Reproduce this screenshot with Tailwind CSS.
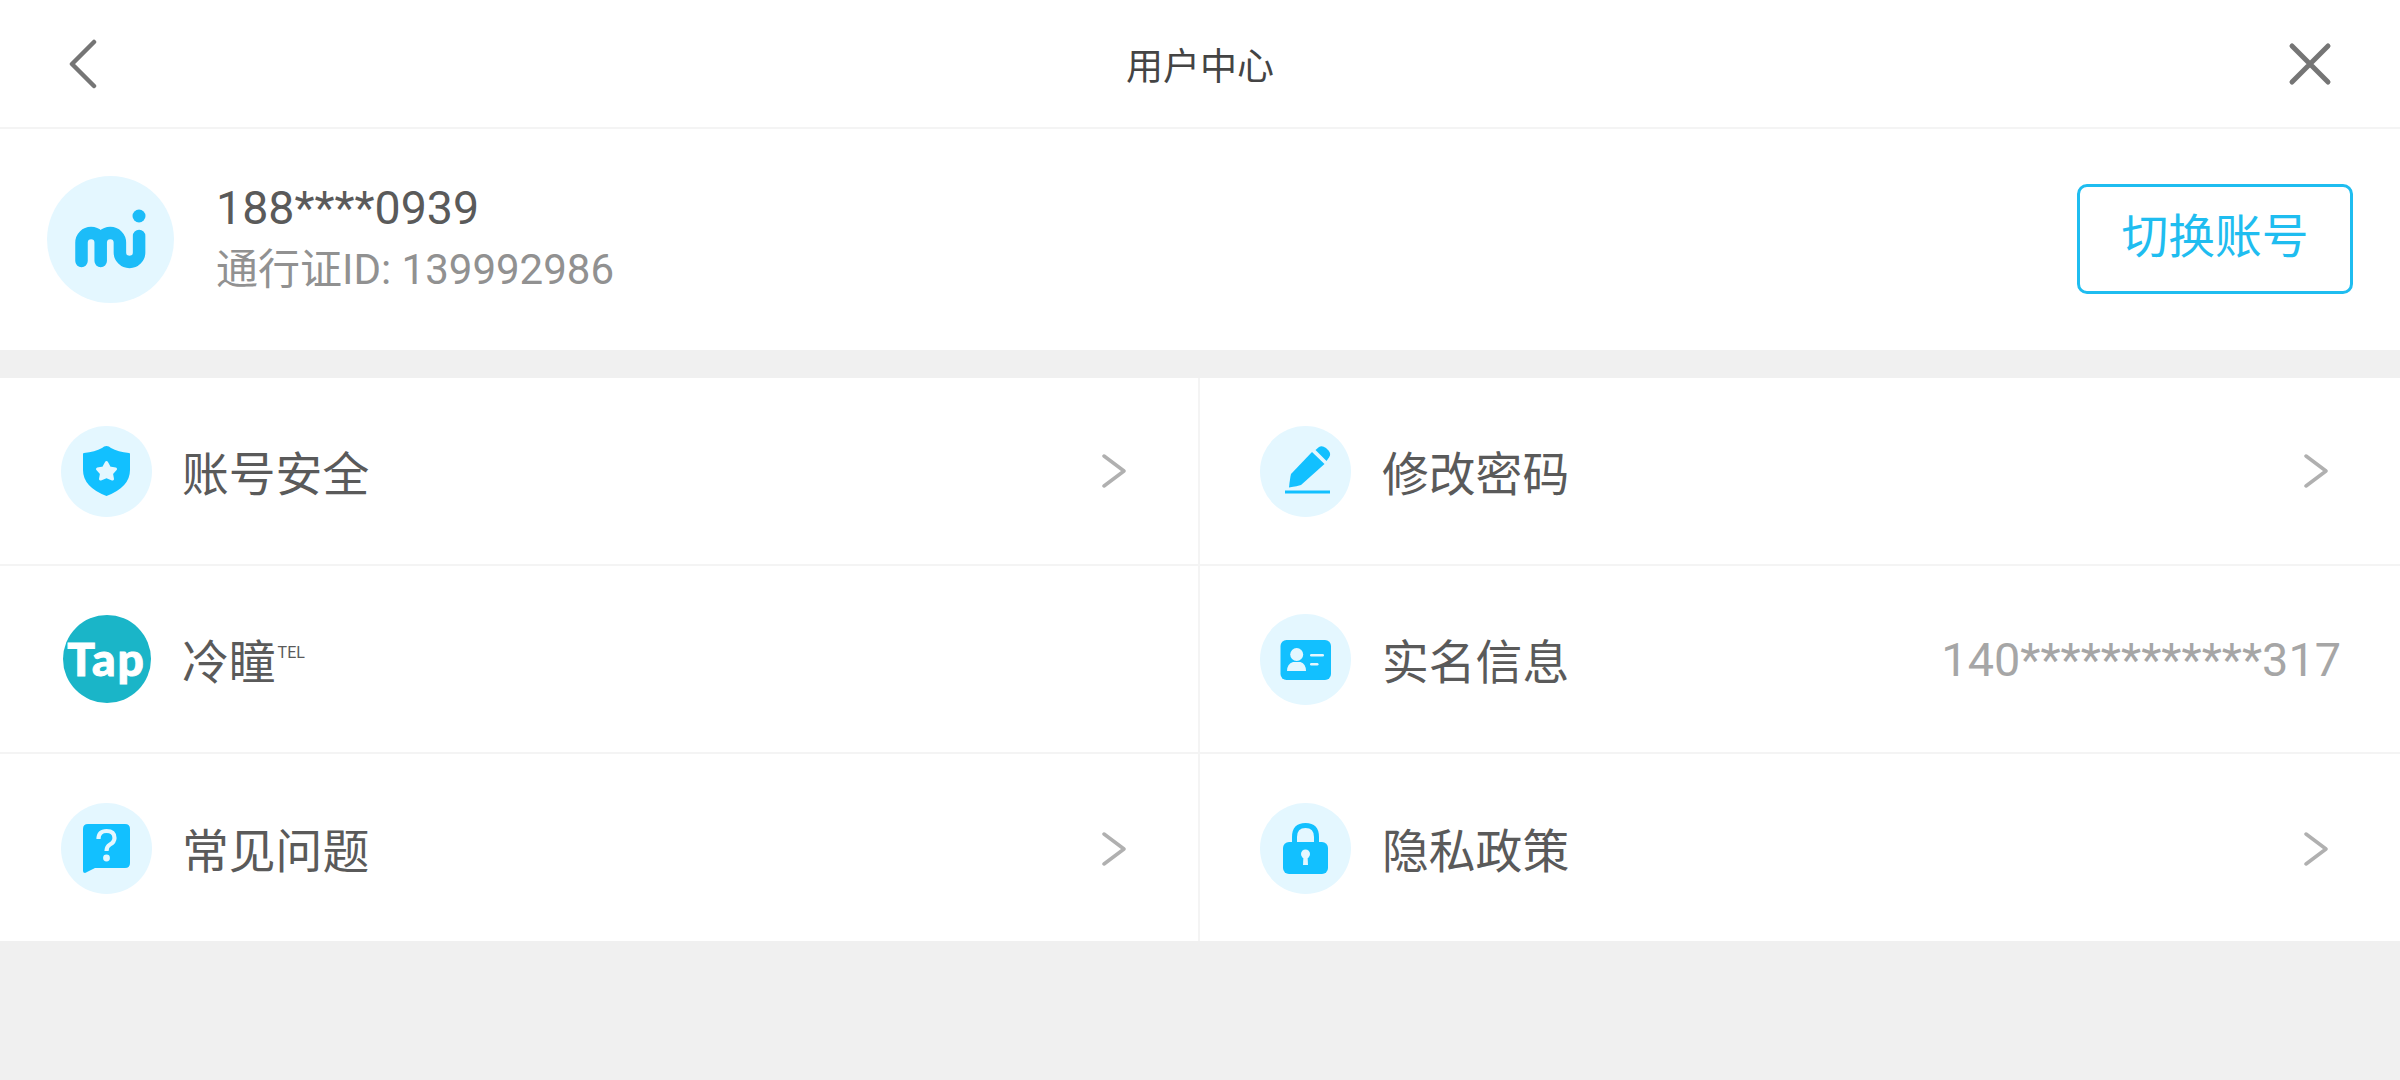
<!DOCTYPE html>
<html lang="zh-CN">
<head>
    <meta charset="UTF-8">
    <script src="https://cdn.jsdelivr.net/npm/@tailwindcss/browser@4"></script>
    <title>用户中心</title>
</head>
<body class="bg-[#f0f0f0] h-[1080px] overflow-hidden font-['Roboto','Noto_Sans_CJK_SC',sans-serif] text-[#5a5a5a]">
    <!-- Header -->
    <header class="h-[129px] bg-white border-b-2 border-[#f4f4f4] flex items-center justify-between pl-[68px] pr-[68px]">
        <div class="w-[44px] pt-[1px]">
            <svg class="w-[30px] h-[50px]" viewBox="0 0 30 50" fill="none" stroke="#757575" stroke-width="4.5" stroke-linecap="round" stroke-linejoin="round"><path d="M26 3 L4 25 L26 47"/></svg>
        </div>
        <h1 class="text-[37px] pt-[8px] text-[#444]">用户中心</h1>
        <svg class="w-[44px] h-[44px]" viewBox="0 0 44 44" fill="none" stroke="#757575" stroke-width="5" stroke-linecap="round"><path d="M4 4 L40 40 M40 4 L4 40"/></svg>
    </header>

    <!-- Account -->
    <section class="h-[221px] bg-white flex items-center justify-between pl-[47px] pr-[47px]">
        <div class="flex items-center gap-[42px]">
            <div class="w-[127px] h-[127px] rounded-full bg-[#e4f7ff]">
                <svg class="w-[127px] h-[127px]" viewBox="0 0 127 127" fill="none" stroke="#1cbcf8" stroke-width="12.5" stroke-linecap="round" stroke-linejoin="round"><path d="M34.5 85 V66.6 a9.6 9.6 0 0 1 19.2 0 V85 M53.7 66.6 a9.6 9.6 0 0 1 19.2 0 V76.4 a9.6 9.6 0 0 0 19.2 0 V60"/><circle cx="92" cy="40" r="6.5" fill="#1cbcf8" stroke="none"/></svg>
            </div>
            <div class="flex flex-col pb-[2px]">
                <span class="text-[46.5px] leading-[62px]">188****0939</span>
                <span class="text-[42px] leading-[62px] text-[#919191]">通行证ID: 139992986</span>
            </div>
        </div>
        <button class="w-[276px] h-[110px] mb-[2px] pb-[2px] border-[3px] border-[#1fbdf0] rounded-[10px] text-[46.8px] text-[#1fbdf0]">切换账号</button>
    </section>

    <!-- Menu -->
    <div class="mt-[28px] bg-white grid grid-cols-[1198px_1202px] grid-rows-[188px_188px_187px]">
        <div class="flex items-center pl-[61px] pr-[71px] border-b-2 border-[#f4f4f4]">
            <div class="w-[91px] h-[91px] rounded-full bg-[#e4f7ff] flex items-center justify-center"><svg class="w-[47px] h-[50px]" viewBox="0 0 47 50"><path fill="#12c0ff" d="M23.5 0 Q26 0 28 2 Q35 6 46 7 Q47 7 47 8 V24 Q47 41 23.5 50 Q0 41 0 24 V8 Q0 7 1 7 Q12 6 19 2 Q21 0 23.5 0 Z"/><path fill="#e4f7ff" stroke="#e4f7ff" stroke-width="3" stroke-linejoin="round" d="M23.5 16.5 L26.5 22 L32.5 23 L28.5 27.5 L29.5 33 L23.5 30.5 L17.5 33 L18.5 27.5 L14.5 23 L20.5 22 Z"/></svg></div>
            <span class="text-[46.8px] pt-[8px] ml-[30px] flex-1">账号安全</span>
            <svg class="w-[26px] h-[34px]" viewBox="0 0 26 34" fill="none" stroke="#b0b0b0" stroke-width="3.5" stroke-linecap="round" stroke-linejoin="round"><path d="M3 2 L23 17 L3 32"/></svg>
        </div>
        <div class="flex items-center pl-[60px] pr-[71px] border-l-2 border-b-2 border-[#f4f4f4]">
            <div class="w-[91px] h-[91px] rounded-full bg-[#e4f7ff]"><svg class="w-[91px] h-[91px]" viewBox="5 6 91 91"><path fill="#12c0ff" d="M57 32 L69.5 44 L46 65 Q43 66 34 67.5 Q35 58 36 54 Z"/><path fill="#12c0ff" d="M60.5 30 L64 27 Q67 25 71 28 L73.5 30.5 Q76.5 34 74 37.5 L71.5 41 Z"/><rect x="30" y="70.5" width="45" height="3" fill="#12c0ff"/></svg></div>
            <span class="text-[46.8px] pt-[8px] ml-[31px] flex-1">修改密码</span>
            <svg class="w-[26px] h-[34px]" viewBox="0 0 26 34" fill="none" stroke="#b0b0b0" stroke-width="3.5" stroke-linecap="round" stroke-linejoin="round"><path d="M3 2 L23 17 L3 32"/></svg>
        </div>

        <div class="flex items-center pl-[61px] pr-[71px] border-b-2 border-[#f4f4f4]">
            <div class="w-[91px] h-[91px] flex items-center justify-center"><div class="w-[88px] h-[88px] rounded-full bg-[#1ab5c8] flex items-center justify-center text-white font-['Lato',sans-serif] font-black text-[46px] tracking-[2px] [-webkit-text-stroke:1px_white] leading-none">Tap</div></div>
            <span class="text-[46.8px] pt-[8px] ml-[30px]">冷瞳</span>
            <span class="text-[16px] leading-none self-start mt-[79px] ml-[2px]">TEL</span>
        </div>
        <div class="flex items-center justify-between pl-[60px] pr-[59px] border-l-2 border-b-2 border-[#f4f4f4]">
            <div class="flex items-center">
                <div class="w-[91px] h-[91px] rounded-full bg-[#e4f7ff]"><svg class="w-[91px] h-[91px]" viewBox="5 3 91 91"><rect x="25.5" y="29" width="50.5" height="40" rx="6" fill="#12c0ff"/><circle cx="41.7" cy="43.5" r="6.5" fill="#e4f7ff"/><path fill="#e4f7ff" d="M32 60 Q32 53 38 51 H45.5 Q51 53 51 60 Z"/><rect x="55" y="43" width="14" height="2.6" rx="1.3" fill="#e4f7ff"/><rect x="55" y="52" width="8.5" height="2.6" rx="1.3" fill="#e4f7ff"/></svg></div>
                <span class="text-[46.8px] pt-[8px] ml-[31px]">实名信息</span>
            </div>
            <span class="text-[46.8px] pt-[2px] text-[#a6a6a6]">140************317</span>
        </div>

        <div class="flex items-center pt-[2px] pl-[61px] pr-[71px]">
            <div class="w-[91px] h-[91px] rounded-full bg-[#e4f7ff] flex items-center justify-center"><svg class="w-[47px] h-[49px]" viewBox="0 0 47 49"><path fill="#12c0ff" d="M5 0 H42 Q47 0 47 5 V39 Q47 44 42 44 H12 L2 49 Q0 49 0 47 V5 Q0 0 5 0 Z"/><path fill="none" stroke="#e4f7ff" stroke-width="4.2" d="M15.5 15 Q15.5 7 23.5 7 Q31.5 7 31.5 14 Q31.5 18 27 20.5 Q23.5 22.5 23.5 27"/><circle cx="23.5" cy="34" r="3.4" fill="#e4f7ff"/></svg></div>
            <span class="text-[46.8px] pt-[8px] ml-[30px] flex-1">常见问题</span>
            <svg class="w-[26px] h-[34px]" viewBox="0 0 26 34" fill="none" stroke="#b0b0b0" stroke-width="3.5" stroke-linecap="round" stroke-linejoin="round"><path d="M3 2 L23 17 L3 32"/></svg>
        </div>
        <div class="flex items-center pt-[2px] pl-[60px] pr-[71px] border-l-2 border-[#f4f4f4]">
            <div class="w-[91px] h-[91px] rounded-full bg-[#e4f7ff] flex items-center justify-center"><svg class="w-[45px] h-[51px]" viewBox="0 0 45 51"><path fill="none" stroke="#12c0ff" stroke-width="5" d="M11.5 24 V14 Q11.5 2.5 22.5 2.5 Q33.5 2.5 33.5 14 V24"/><rect y="19" width="45" height="32" rx="6" fill="#12c0ff"/><circle cx="22.5" cy="31" r="4.5" fill="#e4f7ff"/><path fill="#e4f7ff" d="M20.5 32 H24.5 L25 42 H20 Z"/></svg></div>
            <span class="text-[46.8px] pt-[8px] ml-[31px] flex-1">隐私政策</span>
            <svg class="w-[26px] h-[34px]" viewBox="0 0 26 34" fill="none" stroke="#b0b0b0" stroke-width="3.5" stroke-linecap="round" stroke-linejoin="round"><path d="M3 2 L23 17 L3 32"/></svg>
        </div>
    </div>
</body>
</html>
